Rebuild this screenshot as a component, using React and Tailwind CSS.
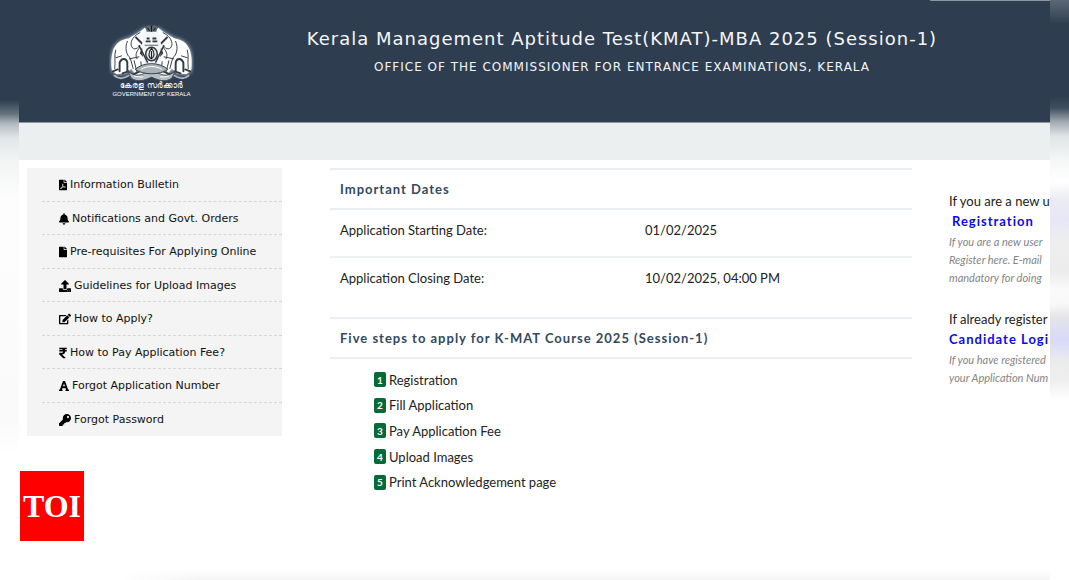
import React from 'react';
import {
  FaFilePdf,
  FaBell,
  FaFile,
  FaUpload,
  FaEdit,
  FaRupeeSign,
  FaFont,
  FaKey,
} from 'react-icons/fa';

const menuItems = [
  { label: 'Information Bulletin', icon: FaFilePdf, width: 'w-2' },
  { label: 'Notifications and Govt. Orders', icon: FaBell, width: 'w-2.5' },
  { label: 'Pre-requisites For Applying Online', icon: FaFile, width: 'w-2' },
  { label: 'Guidelines for Upload Images', icon: FaUpload, width: 'w-3' },
  { label: 'How to Apply?', icon: FaEdit, width: 'w-3' },
  { label: 'How to Pay Application Fee?', icon: FaRupeeSign, width: 'w-2' },
  { label: 'Forgot Application Number', icon: FaFont, width: 'w-2.5' },
  { label: 'Forgot Password', icon: FaKey, width: 'w-3' },
];

const dates = [
  { label: 'Application Starting Date:', value: '01/02/2025' },
  { label: 'Application Closing Date:', value: '10/02/2025, 04:00 PM' },
];

const steps = [
  'Registration',
  'Fill Application',
  'Pay Application Fee',
  'Upload Images',
  'Print Acknowledgement page',
];

// One elephant, facing the centre of the emblem
function Elephant() {
  return (
    <g>
      <path
        d="M36 4 C31 9 24 12 19 15 C11 16 5 21 3 28 C1 34 1 42 2 48 L7 52 L17 51 L22 46 L27 53 L38 53 L40 24 L40 8 Z"
        fill="#fff"
      />
      <g fill="none" stroke="#333b42" strokeWidth="1" strokeLinecap="round">
        <path d="M31 9 C25 12 21 17 22 22 C23 27 28 27 31 22" />
        <path d="M27 14 L35 22 L32 30 L38 37" strokeWidth="2" />
        <path d="M18 18 C15 25 17 32 21 35 L24 46" />
        <path d="M6 27 C4 33 6 38 5 46" />
        <path d="M10 49 L10 40 C12 35 17 35 18 40 L18 49" strokeWidth="2" />
        <path d="M6 35 L12 33 M20 36 L30 34 M25 38 L28 50 M32 39 L33 50" />
        <path d="M3 49 L8 47 M13 51 L19 49 M24 52 L31 49" strokeWidth="2" />
        <path d="M31 24 C27 29 26 32 28 36" />
      </g>
    </g>
  );
}

function Emblem() {
  return (
    <figure className="flex w-[85px] flex-col items-center">
      <svg viewBox="0 0 86 60" className="h-[58px] w-full" aria-hidden="true">
        <g className="drop-shadow-[0_0_2px_#cbd5e1]">
          <Elephant />
          <g transform="translate(86 0) scale(-1 1)">
            <Elephant />
          </g>
          <path d="M35 10 L39 5 L47 5 L51 10 L53 22 L51 44 L43 50 L35 44 L33 22 Z" fill="#f4f5f6" />
        </g>
        <path d="M38 8 L37 4 L40 1 L43 3 L46 1 L49 4 L48 8 Z" fill="#5b6670" />
        <path d="M39 4 L41 7 M43 2 L43 8 M47 4 L45 7" stroke="#111" strokeWidth="1" />
        <path d="M38 15 H41 M44 15 H48 M37 18 H42 M44 18 H49" stroke="#30363b" strokeWidth="2" />
        <path d="M36 22 H50" stroke="#59636b" strokeWidth="1" />
        <ellipse cx="43" cy="31" rx="6" ry="7" fill="#e7eaec" stroke="#30363b" strokeWidth="1.5" />
        <path d="M43 25 C39 30 40 35 43 36 C46 34 47 30 43 25 M43 28 V36" fill="none" stroke="#222" strokeWidth="1.2" />
        <path d="M30 22 L39 40 M56 22 L47 40" stroke="#30363b" strokeWidth="1.5" />
        <path d="M18 48 C27 57 36 52 43 46 C50 52 59 57 68 48 L64 56 C57 61 50 58 43 55 C36 58 29 61 22 56 Z" fill="#b7bec4" stroke="#3a444c" strokeWidth="1" />
        <path d="M26 47 C35 39 51 39 60 47 C51 53 35 53 26 47 Z" fill="#aab2b8" stroke="#333d45" strokeWidth="1" />
        <path d="M32 47 C39 43 47 43 54 47 M25 54 L34 55 M52 55 L61 54" fill="none" stroke="#fff" strokeWidth="1" />
        <path d="M4 53 C10 58 15 56 20 53 M82 53 C76 58 71 56 66 53" fill="none" stroke="#aab4bc" strokeWidth="2" />
      </svg>
      <figcaption className="text-center font-['Liberation_Sans',sans-serif] whitespace-nowrap text-white">
        <span lang="ml" className="block text-[8px] leading-[8px]">കേരള സർക്കാർ</span>
        <span className="block text-[6px] leading-[8px]">GOVERNMENT OF KERALA</span>
      </figcaption>
    </figure>
  );
}

function Header() {
  return (
    <header className="relative flex h-[123px] items-start border-b border-[#8995a0] bg-[#2e3e50] pl-[90px] text-[#f5f6f7]">
      <div className="absolute top-0 right-0 h-px w-[120px] rounded-l-full bg-[#8d959d]" />
      <div className="pt-6">
        <Emblem />
      </div>
      <div className="flex-1 pt-6 text-center font-['DejaVu_Sans',sans-serif]">
        <h1 className="text-[18px] leading-[30px] tracking-[1px]">
          Kerala Management Aptitude Test(KMAT)-MBA 2025 (Session-1)
        </h1>
        <p className="text-[12px] leading-[26px] tracking-[1px]">
          OFFICE OF THE COMMISSIONER FOR ENTRANCE EXAMINATIONS, KERALA
        </p>
      </div>
    </header>
  );
}

function SideMenu() {
  return (
    <nav className="w-[255px] shrink-0 bg-[#f4f4f4] pl-[15px] font-['DejaVu_Sans',sans-serif]">
      <ul className="grid h-[268px] grid-rows-8 divide-y divide-dashed divide-[#d6d6d6]">
        {menuItems.map(({ label, icon: Icon, width }) => (
          <li key={label} className="flex items-center pt-0.5 pl-[17px]">
            <a href="#" className="flex items-center gap-[3px] text-[11px] whitespace-nowrap text-[#111]">
              <Icon className={`h-3 shrink-0 text-black ${width}`} />
              {label}
            </a>
          </li>
        ))}
      </ul>
    </nav>
  );
}

function SectionTitle({ children }) {
  return (
    <h2 className="border-y-2 border-[#eceff1] px-2.5 text-[13px] leading-[38px] font-bold tracking-[1px] text-[#34495e]">
      {children}
    </h2>
  );
}

function MainContent() {
  return (
    <main className="w-[582px] shrink-0 text-[13px] leading-5 text-[#222]">
      <SectionTitle>Important Dates</SectionTitle>
      <table className="w-full table-fixed">
        <tbody className="divide-y-2 divide-[#edf1f2]">
          {dates.map((row) => (
            <tr key={row.label} className="h-[47px] align-top">
              <th scope="row" className="w-[305px] px-2.5 pt-2.5 text-left font-normal">
                {row.label}
              </th>
              <td className="px-2.5 pt-2.5">{row.value}</td>
            </tr>
          ))}
        </tbody>
      </table>
      <section className="pt-[13px]">
        <SectionTitle>Five steps to apply for K-MAT Course 2025 (Session-1)</SectionTitle>
        <ol className="grid h-[136px] grid-rows-5 pt-2 pl-[44px]">
          {steps.map((step, i) => (
            <li key={step} className="flex items-center gap-[3px]">
              <span className="flex h-[15px] w-3 items-center justify-center rounded-xs bg-[#046a38] text-[10px] font-bold text-white">
                {i + 1}
              </span>
              {step}
            </li>
          ))}
        </ol>
      </section>
    </main>
  );
}

function UserLinks() {
  return (
    <aside className="min-w-0 flex-1 overflow-hidden pt-[23px] whitespace-nowrap">
      <section className="mb-[22px]">
        <p className="text-[13px] leading-5 text-[#222]">If you are a new u</p>
        <a href="#" className="block pl-[3px] text-[13px] leading-5 font-bold tracking-[1px] text-[#0b0bf0]">
          Registration
        </a>
        <p className="pt-0.5 text-[11px] leading-[18px] text-[#858585] italic">
          If you are a new user
          <br />
          Register here. E-mail
          <br />
          mandatory for doing
        </p>
      </section>
      <section>
        <p className="text-[13px] leading-5 text-[#222]">If already register</p>
        <a href="#" className="block text-[13px] leading-5 font-bold tracking-[1px] text-[#0b0bf0]">
          Candidate Logi
        </a>
        <p className="pt-0.5 text-[11px] leading-[18px] text-[#858585] italic">
          If you have registered
          <br />
          your Application Num
        </p>
      </section>
    </aside>
  );
}

function App() {
  return (
    <div className="flex min-h-screen overflow-hidden bg-white font-['Lato',sans-serif]">
      <div className="w-[19px] shrink-0 bg-[linear-gradient(to_bottom,#2e3e50_0px,#2e3e50_100px,#66737f_114px,#b4bbc1_124px,#e3e6e8_138px,#f2f4f4_160px,#fdfdfd_200px,#fafafa_420px,#ffffff_455px)]" />
      <div className="flex min-w-0 flex-1 flex-col">
        <Header />
        <div className="h-[37px] bg-[#ebeff0]" />
        <div className="flex items-start pt-2 pl-2">
          <SideMenu />
          <div className="flex min-w-0 flex-1 gap-[37px] pl-12">
            <MainContent />
            <UserLinks />
          </div>
        </div>
        {/* publisher badge, tucked under the menu beside the end of the steps list */}
        <div className="-mt-8 flex flex-1 flex-col justify-end">
          <div className="mb-[29px] ml-px flex h-[70px] w-16 items-center justify-center bg-[#fe0000] font-['Liberation_Serif',serif] text-[32px] font-bold text-white">
            TOI
          </div>
          <div className="ml-[100px] h-[10px] bg-[linear-gradient(to_right,white,transparent_80px),linear-gradient(to_bottom,white,#f4f4f4)]" />
        </div>
      </div>
      <div className="w-[19px] shrink-0 bg-[linear-gradient(to_bottom,#5c6874_0px,#2e3e50_24px,#2e3e50_96px,#3f4e5e_108px,#a3abb2_122px,#e0e4e6_136px,#f5f7f7_160px,#ffffff_182px,#ebebf1_200px,#e6e6f8_220px,#eeeeee_240px,#ececec_272px,#fafafa_290px,#f8f8f8_304px,#e4e4e8_318px,#d9d9fb_340px,#ececec_362px,#eeeeee_380px,#ffffff_400px)]" />
    </div>
  );
}

export default App;
